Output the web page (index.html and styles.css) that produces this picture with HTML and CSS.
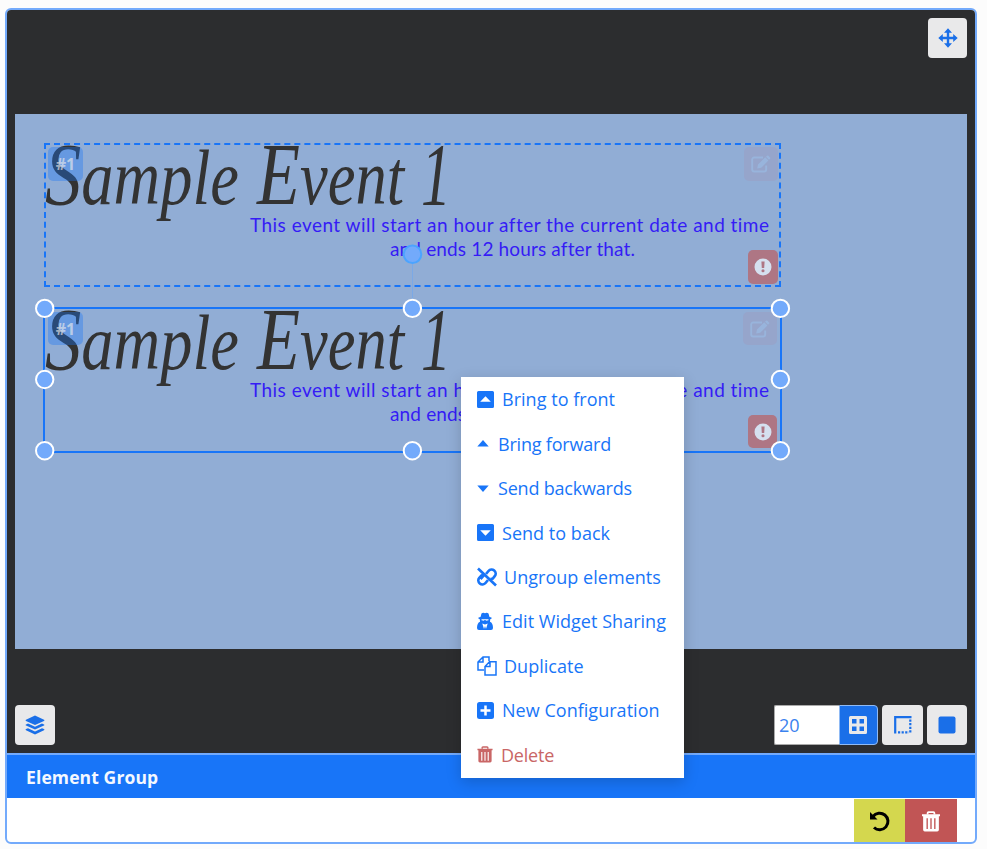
FILE: index.html
```html
<!DOCTYPE html>
<html lang="en">
<head>
<meta charset="utf-8">
<title>Element Group</title>
<link rel="stylesheet" href="styles.css">
</head>
<body>
<svg class="defs" width="0" height="0">
  <defs>
    <symbol id="i-edit" viewBox="0 0 20 18"><path d="M12 2.500H3.200a2 2 0 0 0-2 2v10a2 2 0 0 0 2 2h10a2 2 0 0 0 2-2v-4" fill="none" stroke="currentColor" stroke-width="1.900"/><path d="m7 9.500 7.200-7.200 3.200 3.200-7.200 7.200-4 .8zM15 1.800l1-1q.7-.7 1.400 0l1.600 1.600q.7.700 0 1.400l-1 1z" fill="currentColor"/></symbol>
    <symbol id="i-alert" viewBox="0 0 18 18"><path fill="currentColor" fill-rule="evenodd" d="M9 .5a8.500 8.500 0 1 1 0 17 8.500 8.500 0 0 1 0-17zM7.400 3.500l.4 6.500h2.400l.4-6.500zM9 11.200a1.550 1.550 0 1 0 0 3.100 1.550 1.550 0 0 0 0-3.100z"/></symbol>
    <symbol id="i-trash" viewBox="0 0 16 18"><path d="M5 3V1.800q0-.8.8-.8h4.400q.8 0 .8.800V3" fill="none" stroke="currentColor" stroke-width="1.600"/><path fill="currentColor" fill-rule="evenodd" d="M0 2.800h16v1.700h-1V16q0 1.500-1.500 1.500h-11Q1 17.500 1 16V4.500H0zM4 6.300v9.200h1.200V6.300zm3.400 0v9.200h1.200V6.300zm3.400 0v9.200H12V6.300z"/></symbol>
  </defs>
</svg>
<main class="editor">
  <section class="viewer">
    <header class="viewer-top">
      <button class="tool move" aria-label="Move"><svg width="20" height="20" viewBox="0 0 20 20"><path d="M10 3v14M3 10h14" stroke="currentColor" stroke-width="2.400"/><path fill="currentColor" d="m10 .3 4 4.500H6zM10 19.700l4-4.500H6zM.3 10l4.500-4v8zM19.700 10l-4.500-4v8z"/></svg></button>
    </header>
    <div class="canvas">
      <div class="group dashed"></div>
      <div class="group selected"></div>
      <svg class="art first" width="737" height="146"><g class="heading"><text x="1" y="61" textLength="194" lengthAdjust="spacingAndGlyphs"><tspan class="cap">S</tspan>ample</text><text x="213" y="61" textLength="147" lengthAdjust="spacingAndGlyphs"><tspan class="cap">E</tspan>vent</text><text class="cap" x="377" y="61" textLength="30" lengthAdjust="spacingAndGlyphs">1</text></g><g class="blurb"><text x="206" y="89" textLength="519">This event will start an hour after the current date and time</text><text x="346" y="113" textLength="245">and ends 12 hours after that.</text></g></svg>
      <svg class="art second" width="737" height="146"><g class="heading"><text x="1" y="61" textLength="194" lengthAdjust="spacingAndGlyphs"><tspan class="cap">S</tspan>ample</text><text x="213" y="61" textLength="147" lengthAdjust="spacingAndGlyphs"><tspan class="cap">E</tspan>vent</text><text class="cap" x="377" y="61" textLength="30" lengthAdjust="spacingAndGlyphs">1</text></g><g class="blurb"><text x="206" y="89" textLength="519">This event will start an hour after the current date and time</text><text x="346" y="113" textLength="245">and ends 12 hours after that.</text></g></svg>
      <span class="badge slot one">#1</span><span class="badge edit one"><svg width="20" height="18"><use href="#i-edit"/></svg></span><span class="badge alert one"><svg width="18" height="18"><use href="#i-alert"/></svg></span>
      <span class="badge slot two">#1</span><span class="badge edit two"><svg width="20" height="18"><use href="#i-edit"/></svg></span><span class="badge alert two"><svg width="18" height="18"><use href="#i-alert"/></svg></span>
      <svg class="handles" width="952" height="535">
        <path d="M397.500 140v54" stroke="#7ba9e6"/><circle class="rotate" cx="397.500" cy="140.300" r="8.800"/>
        <g class="grip"><circle cx="29.700" cy="194.400" r="8.700"/><circle cx="397.400" cy="194.400" r="8.700"/><circle cx="765.400" cy="194.400" r="8.700"/><circle cx="29.700" cy="265.500" r="8.700"/><circle cx="765.400" cy="265.500" r="8.700"/><circle cx="29.700" cy="336.700" r="8.700"/><circle cx="397.400" cy="336.700" r="8.700"/><circle cx="765.400" cy="336.700" r="8.700"/></g>
      </svg>
    </div>
    <footer class="viewer-bottom">
      <button class="tool" aria-label="Layers"><svg width="20" height="20" viewBox="0 0 20 20" fill="currentColor"><path d="m10 .5 9 4.300q1 .6 0 1.200l-9 4-9-4q-1-.6 0-1.200z"/><path d="m3 8.500 7 3.200 7-3.200 2 .9q1 .6 0 1.200l-9 4-9-4q-1-.6 0-1.200z"/><path d="m3 13.200 7 3.200 7-3.200 2 .9q1 .6 0 1.200l-9 4.200-9-4.200q-1-.6 0-1.200z"/></svg></button>
      <span class="grow"></span>
      <input class="grid-size" value="20" aria-label="Grid size">
      <button class="tool active" aria-label="Snap to grid"><svg width="18" height="18" viewBox="0 0 18 18"><path fill="currentColor" fill-rule="evenodd" d="M1.500 0h15Q18 0 18 1.500v15q0 1.500-1.500 1.500h-15Q0 18 0 16.500v-15Q0 0 1.500 0zM3 3v4.500h4.500V3zm7.500 0v4.500H15V3zM3 10.500V15h4.500v-4.500zm7.500 0V15H15v-4.500z"/></svg></button>
      <button class="tool border" aria-label="Snap to borders"><svg width="18" height="18" viewBox="0 0 18 18" fill="none" stroke="currentColor" stroke-width="2.200"><path d="M1.200 17.500V1.200h16.300"/><path d="M16.300 3.500v14" stroke-dasharray="2.200 1.400"/><path d="M4 16.300h11" stroke-dasharray="2.200 1.400"/></svg></button>
      <button class="tool last" aria-label="Snap to elements"><svg width="18" height="18"><rect x=".5" y=".5" width="17" height="17" rx="2" fill="currentColor"/></svg></button>
    </footer>
  </section>
  <div class="title-bar">Element Group</div>
  <div class="actions">
    <button class="undo" aria-label="Undo"><svg width="22" height="22" viewBox="0 0 22 22"><path d="M4 6.500A8.300 8.300 0 1 1 5 17.500" fill="none" stroke="#000" stroke-width="3"/><path d="M1 2v7.500h7.500z"/></svg></button>
    <button class="remove" aria-label="Delete"><svg width="18" height="21" viewBox="0 0 16 18" preserveAspectRatio="none"><use href="#i-trash"/></svg></button>
  </div>
</main>
<nav class="menu">
  <a><svg width="17" height="17" viewBox="0 0 17 17"><path fill="currentColor" fill-rule="evenodd" d="M1.500 0h14Q17 0 17 1.500v14q0 1.500-1.500 1.500h-14Q0 17 0 15.500v-14Q0 0 1.500 0zM3.200 10.800h10.600l-5.300-5.500z"/></svg><span>Bring to front</span></a>
  <a class="tight"><svg class="narrow" width="12" height="17"><path d="M.3 11.500h11.400L6 5z" fill="currentColor"/></svg><span>Bring forward</span></a>
  <a class="tight"><svg class="narrow" width="12" height="17"><path d="M.3 5.500h11.400L6 12z" fill="currentColor"/></svg><span>Send backwards</span></a>
  <a><svg width="17" height="17" viewBox="0 0 17 17"><path fill="currentColor" fill-rule="evenodd" d="M1.500 0h14Q17 0 17 1.500v14q0 1.500-1.500 1.500h-14Q0 17 0 15.500v-14Q0 0 1.500 0zM3.200 6.200h10.600l-5.300 5.500z"/></svg><span>Send to back</span></a>
  <a><svg class="wide" width="20" height="20" viewBox="0 0 20 20" fill="none" stroke="currentColor" stroke-width="2.700"><path d="M1 1.500 19 18.500"/><path d="m9 7 2.500-3a4 4 0 0 1 6.200 5.200L15.500 12M11 13l-2.500 3a4 4 0 0 1-6.200-5.200L4.500 8.500 6.500 8M13.500 12l3-.5M3.500 12l3.500-4"/></svg><span>Ungroup elements</span></a>
  <a><svg class="mid" width="16" height="19" viewBox="0 0 16 19"><path fill="currentColor" fill-rule="evenodd" d="M3.500 5 4.500 1.500Q6 .2 8 1.200 10 .2 11.500 1.500l1 3.500 2 .5v1.300l-1.300.5-.2 2.500Q16 11 16 16q0 2-2 2H2q-2 0-2-2 0-5 3-6.200L2.800 7.300l-1.300-.5V5.500zM4.500 7.200v1l2.500.6.500-.8h1l.5.8 2.500-.6v-1zM5.300 11.500l1.700 5.500 1-3 1 3 1.700-5.500L8 12.500z"/></svg><span>Edit Widget Sharing</span></a>
  <a><svg class="wide" width="20" height="20" viewBox="0 0 20 20" fill="none" stroke="currentColor" stroke-width="1.500"><path d="M7 14H1V6l5-5h6v4M6 1v5H1M12.500 5.800H19V19H8v-8.500zM13 5.500v5H8"/></svg><span>Duplicate</span></a>
  <a><svg width="17" height="17"><rect width="17" height="17" rx="2.500" fill="currentColor"/><path d="M8.500 3.500v10M3.500 8.500h10" stroke="#fff" stroke-width="2.500"/></svg><span>New Configuration</span></a>
  <a class="danger tight"><svg class="bin" width="16" height="17"><use href="#i-trash"/></svg><span>Delete</span></a>
</nav>
</body>
</html>
```
FILE: styles.css
```css
* { box-sizing: border-box; }
body { margin: 0; padding: 8px 10px 5px 5px; height: 849px; overflow: hidden; background: #fcfcfc; font-family: "Open Sans", "Noto Sans", sans-serif; position: relative; }
.defs { position: absolute; }
button { border: 0; padding: 0; font: inherit; display: flex; align-items: center; justify-content: center; }
.editor { width: 972px; height: 836px; border: 2px solid #73aafb; border-radius: 6px; background: #fff; display: flex; flex-direction: column; overflow: hidden; }
.viewer { height: 743px; flex: none; background: #2c2d2f; padding: 8px 8px 8px; display: flex; flex-direction: column; }
.viewer-top { height: 96px; display: flex; justify-content: flex-end; align-items: flex-start; }
.tool { width: 40px; height: 40px; flex: none; border-radius: 4px; background: #e9e9ea; color: #1a6fe8; }
.tool.move { width: 39px; }
.canvas { width: 952px; height: 535px; flex: none; background: #91add5; position: relative; }
.viewer-bottom { flex: 1; display: flex; align-items: flex-end; }
.grow { flex: 1; }
.grid-size { width: 65px; height: 40px; margin: 0; border: 1px solid #aaa; border-right: 0; border-radius: 2px 0 0 2px; padding: 0 4px; font: 18px "Open Sans", sans-serif; color: #3b82ee; background: #fff; }
.tool.active { width: 39px; padding-right: 2px; background: #1a6fe8; color: #e9e9ea; border: 1px solid #8fbaf5; border-radius: 0 4px 4px 0; }
.tool.border { width: 41px; margin-left: 4px; }
.tool.last { margin-left: 4px; }
.title-bar { height: 45px; flex: none; border-top: 2px solid #73aafb; background: #1875f8; color: #f4f8ff; padding-left: 19px; font-size: 17.5px; line-height: 44px; font-weight: 700; letter-spacing: .12px; }
.actions { display: flex; justify-content: flex-end; padding: 1px 18px 0 0; }
.actions button { height: 44px; }
.undo { width: 51px; background: #d4d74e; }
.remove { width: 52px; background: #c15555; color: #fff; }

.group { position: absolute; left: 29px; width: 737px; }
.dashed { top: 29px; height: 144px; border: 2px dashed #1875f8; }
.selected { left: 28px; width: 739px; top: 193px; height: 146px; border: 2px solid #1875f8; }
.art { position: absolute; left: 29px; overflow: visible; }
.first { top: 29px; }
.second { top: 194px; }
.heading { font: italic 79px "Liberation Serif", serif; fill: #333; }
.cap { font-size: 89px; }
.blurb { font: 19px Lato, sans-serif; font-variant-ligatures: none; fill: #351cf5; }
.badge { position: absolute; height: 34px; border-radius: 5px; display: flex; align-items: center; justify-content: center; }
.badge.one { top: 33px; }
.badge.two { top: 198px; height: 33px; }
.slot { left: 33px; width: 35px; background: rgba(24, 117, 248, .35); color: rgba(235, 235, 235, .65); font-size: 16px; font-weight: 700; }
.edit { left: 729px; width: 34px; background: rgba(165, 145, 180, .28); color: #98b4dc; }
.edit.two { left: 728px; }
.alert { left: 733px; width: 30px; background: #ae7684; color: #d5e0ef; }
.alert.one { top: 136px; }
.alert.two { top: 301px; width: 29px; }
.handles { position: absolute; left: 0; top: 0; overflow: visible; }
.grip circle { fill: #73aafb; stroke: #fff; stroke-width: 2; }
.rotate { fill: #73aafb; stroke: #4ba4ff; stroke-width: 2; }

.menu { position: absolute; left: 461px; top: 377px; width: 223px; height: 401px; background: #fff; box-shadow: 0 4px 14px rgba(0, 0, 0, .18); display: grid; grid-template-rows: repeat(9, 1fr); padding: 0 0 1px 16px; font-size: 18px; letter-spacing: .03px; color: #1875f8; }
.menu a { display: flex; align-items: center; gap: 8px; white-space: nowrap; }
.menu .tight { letter-spacing: -.2px; }
.menu .mid { margin-right: 1px; }
.menu .wide { margin-right: -1px; }
.menu .narrow { margin-right: 1px; }
.menu .danger { color: #c96666; }
```
